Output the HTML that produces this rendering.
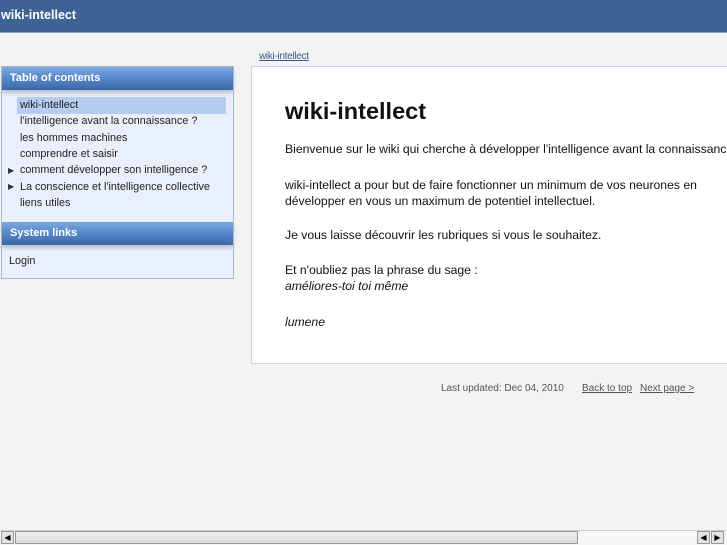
<!DOCTYPE html>
<html><head><meta charset="utf-8"><style>
body{margin:0;width:727px;height:545px;background:#f3f3f3;font-family:"Liberation Sans",sans-serif;position:relative;overflow:hidden}
.top{position:absolute;left:0;top:0;width:727px;height:32px;background:#3e6293;border-bottom:1px solid #8ea4c0}
.top span{position:absolute;left:1px;top:8px;color:#fff;font-size:12.5px;font-weight:bold}
.side{position:absolute;left:1px;top:66px;width:233px;height:213px;background:#eaf0fb;border:1px solid #a7b5c8;box-sizing:border-box}
.hd{height:23px;background:linear-gradient(#7fa8e0,#5487cc 50%,#3c67a3);color:#fff;font-size:11px;font-weight:bold;padding:5px 0 0 8px;box-sizing:border-box;box-shadow:0 3px 4px #b8bfcc}
.it{position:absolute;left:18px;font-size:10.8px;color:#222;white-space:nowrap}
.tri{position:absolute;left:6px;font-size:8px;color:#333}
.main{position:absolute;left:251px;top:66px;width:476px;height:298px;background:#fff;border:1px solid #c7d3e6;border-right:none;box-sizing:border-box;overflow:hidden}
.main p{position:absolute;left:33px;margin:0;font-size:12.2px;color:#111;white-space:nowrap;line-height:16px}
a{color:#3a5a8a}
.foot{position:absolute;top:383px;font-size:10px;color:#555;white-space:nowrap}
</style></head><body>
<div class="top"><span>wiki-intellect</span></div>
<div style="position:absolute;left:259px;top:51px;font-size:10px;letter-spacing:-0.3px"><a href="#">wiki-intellect</a></div>
<div class="side">
<div class="hd">Table of contents</div>
<div style="position:absolute;left:15px;top:30px;width:209px;height:17px;background:#b5cdef"></div>
<div class="it" style="top:32px">wiki-intellect</div>
<div class="it" style="top:48px">l'intelligence avant la connaissance ?</div>
<div class="it" style="top:65px">les hommes machines</div>
<div class="it" style="top:81px">comprendre et saisir</div>
<div class="tri" style="top:99px">▶</div><div class="it" style="top:97px">comment développer son intelligence ?</div>
<div class="tri" style="top:115px">▶</div><div class="it" style="top:114px">La conscience et l'intelligence collective</div>
<div class="it" style="top:130px">liens utiles</div>
<div class="hd" style="position:absolute;left:0;top:155px;width:231px">System links</div>
<div class="it" style="top:188px;left:7px">Login</div>
</div>
<div class="main">
<p style="top:30px;font-size:23.5px;font-weight:bold;line-height:28px">wiki-intellect</p>
<p style="top:74px">Bienvenue sur le wiki qui cherche à développer l'intelligence avant la connaissance</p>
<p style="top:110px">wiki-intellect a pour but de faire fonctionner un minimum de vos neurones en</p>
<p style="top:126px">développer en vous un maximum de potentiel intellectuel.</p>
<p style="top:160px">Je vous laisse découvrir les rubriques si vous le souhaitez.</p>
<p style="top:195px">Et n'oubliez pas la phrase du sage :</p>
<p style="top:211px;font-style:italic">améliores-toi toi même</p>
<p style="top:247px;font-style:italic">lumene</p>
</div>
<div class="foot" style="left:441px">Last updated: Dec 04, 2010</div>
<div class="foot" style="left:582px"><a href="#" style="color:#555">Back to top</a></div>
<div class="foot" style="left:640px"><a href="#" style="color:#555">Next page &gt;</a></div>
<div style="position:absolute;left:0;top:530px;width:727px;height:15px;background:#f7f7f7;border-top:1px solid #ccc;box-sizing:border-box"></div>
<div style="position:absolute;left:1px;top:531px;width:13px;height:13px;background:#e3e3e3;border:1px solid #999;box-sizing:border-box;font-size:8px;text-align:center;line-height:11px">◀</div>
<div style="position:absolute;left:15px;top:531px;width:563px;height:13px;background:linear-gradient(#f0f0f0,#d8d8d8);border:1px solid #999;box-sizing:border-box"></div>
<div style="position:absolute;left:697px;top:531px;width:13px;height:13px;background:#e3e3e3;border:1px solid #999;box-sizing:border-box;font-size:8px;text-align:center;line-height:11px">◀</div>
<div style="position:absolute;left:711px;top:531px;width:13px;height:13px;background:#e3e3e3;border:1px solid #999;box-sizing:border-box;font-size:8px;text-align:center;line-height:11px">▶</div>
</body></html>
